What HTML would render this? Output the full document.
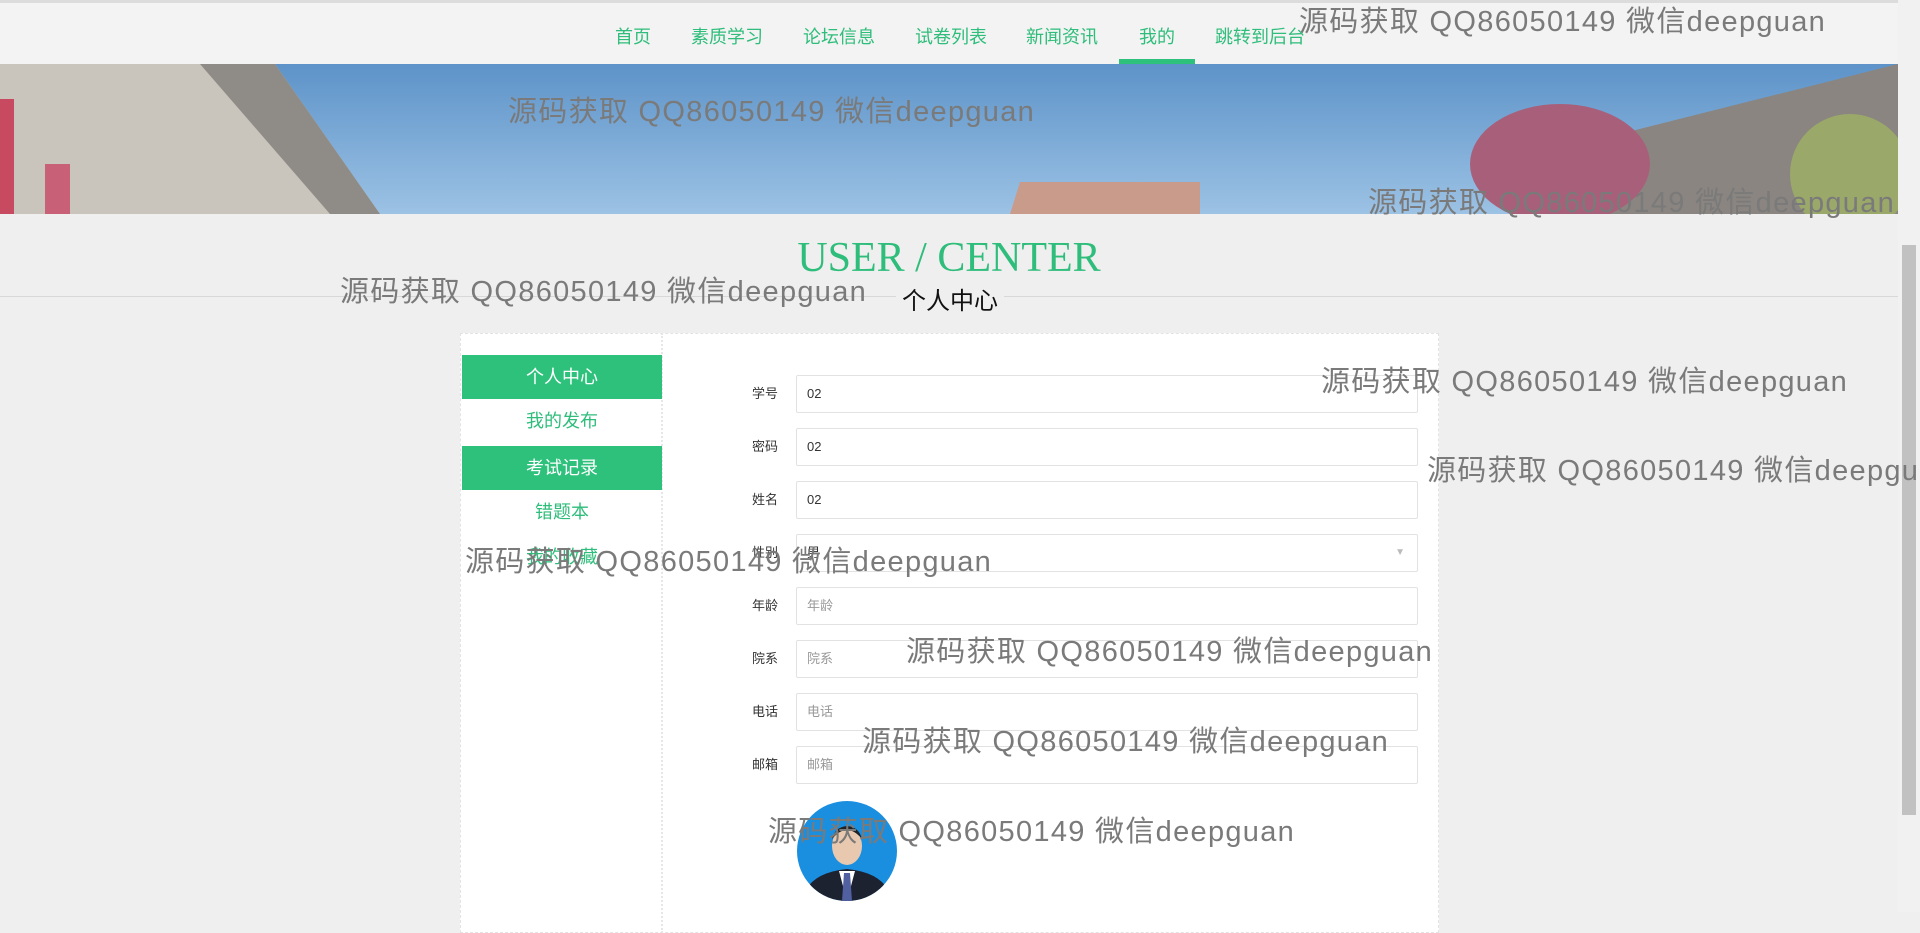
<!DOCTYPE html>
<html><head><meta charset="utf-8">
<style>
*{margin:0;padding:0;box-sizing:border-box}
body{width:1920px;height:912px;overflow:hidden;background:#efefef;font-family:"Liberation Sans","Noto Sans CJK SC",sans-serif;position:relative}
.topline{position:absolute;left:0;top:0;width:1898px;height:3px;background:#dcdcdc}
.nav{position:absolute;left:0;top:3px;width:1898px;height:61px;background:#f3f3f3}
.nav a{position:absolute;top:20px;font-size:18px;color:#2ebd7a;text-decoration:none;white-space:nowrap}
.act{position:absolute;left:1119px;top:59px;width:76px;height:5px;background:#2ec17c}
.banner{position:absolute;left:0;top:64px;width:1898px;height:150px}
.sb{position:absolute;right:0;top:0;width:22px;height:912px;background:#f1f1f1}
.sb div{position:absolute;left:4px;top:245px;width:14px;height:570px;background:#c1c1c1}
.title{position:absolute;left:0;width:1898px;top:234px;text-align:center;font-family:"Liberation Serif",serif;font-size:42px;color:#2ebd7a}
.hline{position:absolute;left:0;top:296px;width:1898px;height:1px;background:#d8d8d8}
.sub{position:absolute;left:896px;top:281px;font-size:24px;color:#111;background:#efefef;padding:0 6px}
.box{position:absolute;left:460px;top:333px;width:979px;height:600px;background:#fff;border:1px dashed #e3e3e3}
.side{position:absolute;left:460px;top:333px;width:203px;height:600px;border-right:2px dotted #e6e6e6}
.mi{position:absolute;left:462px;width:200px;height:44px;line-height:44px;text-align:center;font-size:18px;color:#2ebd7a}
.mi.on{background:#2ec17c;color:#fff}
.lb{position:absolute;left:752px;font-size:13px;color:#333;line-height:38px}
.in{position:absolute;left:796px;width:622px;height:38px;border:1px solid #e2e2e2;border-radius:2px;font-size:13px;line-height:36px;padding-left:10px;color:#333;background:#fff}
.ph{color:#999}
.wm{position:absolute;font-size:29px;letter-spacing:1.3px;color:#7a7a7a;white-space:nowrap;font-family:"Liberation Sans","Noto Sans CJK SC",sans-serif}
</style></head><body>
<div class="topline"></div>
<div class="nav">
<a style="left:615px">首页</a><a style="left:691px">素质学习</a><a style="left:803px">论坛信息</a><a style="left:915px">试卷列表</a><a style="left:1026px">新闻资讯</a><a style="left:1139px">我的</a><a style="left:1215px">跳转到后台</a>
</div>
<div class="act"></div>
<svg class="banner" viewBox="0 0 1898 150" preserveAspectRatio="none">
<defs><linearGradient id="sky" x1="0" y1="0" x2="0" y2="1"><stop offset="0" stop-color="#5d93c9"/><stop offset="1" stop-color="#9cc2e4"/></linearGradient></defs>
<rect width="1898" height="150" fill="url(#sky)"/>
<polygon points="0,0 275,0 380,150 0,150" fill="#c9c4bc"/>
<polygon points="200,0 275,0 380,150 330,150" fill="#8f8c88"/>
<rect x="0" y="35" width="14" height="115" fill="#c84a60"/>
<rect x="45" y="100" width="25" height="50" fill="#c86078"/>
<polygon points="1020,118 1200,118 1200,150 1010,150" fill="#c99b8a"/>
<polygon points="1580,80 1898,0 1898,150 1560,150" fill="#8a8580"/>
<ellipse cx="1560" cy="100" rx="90" ry="60" fill="#a8607a"/>
<ellipse cx="1850" cy="110" rx="60" ry="60" fill="#9aa86a"/>
</svg>
<div class="sb"><div></div></div>
<div class="title">USER / CENTER</div>
<div class="hline"></div>
<div class="sub">个人中心</div>
<div class="box"></div>
<div class="side"></div>
<div class="mi on" style="top:355px">个人中心</div>
<div class="mi" style="top:399px">我的发布</div>
<div class="mi on" style="top:446px">考试记录</div>
<div class="mi" style="top:490px">错题本</div>
<div class="mi" style="top:535px">我的收藏</div>
<div class="lb" style="top:375px">学号</div><div class="in" style="top:375px">02</div>
<div class="lb" style="top:428px">密码</div><div class="in" style="top:428px">02</div>
<div class="lb" style="top:481px">姓名</div><div class="in" style="top:481px">02</div>
<div class="lb" style="top:534px">性别</div><div class="in" style="top:534px">男<span style="position:absolute;right:12px;top:0;color:#bbb;font-size:10px">▼</span></div>
<div class="lb" style="top:587px">年龄</div><div class="in ph" style="top:587px">年龄</div>
<div class="lb" style="top:640px">院系</div><div class="in ph" style="top:640px">院系</div>
<div class="lb" style="top:693px">电话</div><div class="in ph" style="top:693px">电话</div>
<div class="lb" style="top:746px">邮箱</div><div class="in ph" style="top:746px">邮箱</div>
<svg style="position:absolute;left:797px;top:801px" width="100" height="100" viewBox="0 0 100 100">
<ellipse cx="50" cy="50" rx="50" ry="50" fill="#1a8fe0"/>
<clipPath id="c"><ellipse cx="50" cy="50" rx="50" ry="50"/></clipPath>
<g clip-path="url(#c)"><path d="M5,100 Q10,72 50,68 Q90,72 95,100Z" fill="#1d2230"/><polygon points="42,70 58,70 50,100" fill="#fff"/><polygon points="47,72 53,72 55,100 45,100" fill="#5060a0"/><ellipse cx="50" cy="45" rx="15" ry="19" fill="#e8c8ae"/><path d="M35,38 Q50,20 65,38 Q62,26 50,25 Q38,26 35,38Z" fill="#222"/></g>
</svg>
<div class="wm" style="left:1299px;top:-2px">源码获取 QQ86050149 微信deepguan</div>
<div class="wm" style="left:508px;top:88px">源码获取 QQ86050149 微信deepguan</div>
<div class="wm" style="left:1368px;top:179px">源码获取 QQ86050149 微信deepguan</div>
<div class="wm" style="left:340px;top:268px">源码获取 QQ86050149 微信deepguan</div>
<div class="wm" style="left:1321px;top:358px">源码获取 QQ86050149 微信deepguan</div>
<div class="wm" style="left:1427px;top:447px">源码获取 QQ86050149 微信deepguan</div>
<div class="wm" style="left:465px;top:538px">源码获取 QQ86050149 微信deepguan</div>
<div class="wm" style="left:906px;top:628px">源码获取 QQ86050149 微信deepguan</div>
<div class="wm" style="left:862px;top:718px">源码获取 QQ86050149 微信deepguan</div>
<div class="wm" style="left:768px;top:808px">源码获取 QQ86050149 微信deepguan</div>
</body></html>
